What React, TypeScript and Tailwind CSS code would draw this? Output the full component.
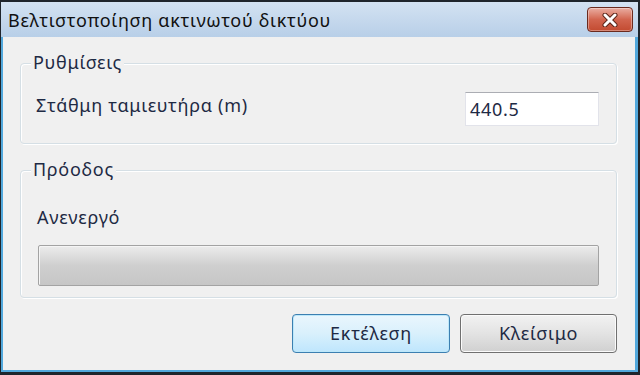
import React from "react";

function CloseButton() {
  return (
    <div className="w-[46px] h-[25px] rounded-[4px] border border-[#6b2a1e] bg-gradient-to-b from-[#e9ada2] via-[#d2654f] to-[#c24a30] flex items-center justify-center shadow-[inset_0_0_0_1px_rgba(255,255,255,0.35)]">
      <svg width="20" height="14" viewBox="0 0 20 14">
        <path d="M5 2 L15 12 M15 2 L5 12" stroke="#5a2418" strokeWidth="5" strokeLinecap="round" />
        <path d="M5 2 L15 12 M15 2 L5 12" stroke="#ffffff" strokeWidth="3" strokeLinecap="round" />
      </svg>
    </div>
  );
}

function GroupBox({ label, className, children }: { label: string; className?: string; children: React.ReactNode }) {
  return (
    <div className={"relative rounded-[4px] border border-[#d5dfe5] shadow-[inset_1px_1px_0_#ffffff,1px_1px_0_#ffffff] " + (className ?? "")}>
      <span className="absolute -top-[13px] left-[10px] px-[2px] bg-[#f0f0f0] text-[18px] tracking-[0.7px] leading-[22px] text-[#1e2a44]">{label}</span>
      {children}
    </div>
  );
}

export default function App() {
  return (
    <div
      className="w-[640px] h-[375px] bg-[#1f252c] pt-[2px] pl-[1px] pr-[2px] pb-[3px]"
      style={{ fontFamily: '"Noto Sans", "Open Sans", sans-serif' }}
    >
      <div className="w-full h-full flex flex-col bg-[#b9d0e8]">
        <div className="h-[35px] shrink-0 flex items-center justify-between pl-[7px] pr-[5px] bg-gradient-to-b from-[#d3e2f2] to-[#b8cfe8]">
          <span className="text-[18px] tracking-[0.7px] leading-[22px] text-[#111] pt-[1px]">Βελτιστοποίηση ακτινωτού δικτύου</span>
          <CloseButton />
        </div>
        <div className="flex-1 flex pl-[2px] pr-[3px] pb-[2px] bg-[#52a8dc]">
          <div className="flex-1 flex flex-col bg-[#f0f0f0] pt-[26px] pl-[17px] pr-[18px]">
            <GroupBox label="Ρυθμίσεις" className="h-[81px]">
              <div className="flex items-start justify-between pl-[15px] pr-[17px] pt-[28px]">
                <span className="text-[18px] tracking-[0.7px] leading-[22px] text-[#1e2a44] pt-[2px]">Στάθμη ταμιευτήρα (m)</span>
                <div className="w-[134px] h-[34px] bg-white border border-[#e2e3ea] border-t-[#abadb3] flex items-center pl-[4px] text-[18px] tracking-[0.7px] text-[#1e2a44]">
                  440.5
                </div>
              </div>
            </GroupBox>
            <GroupBox label="Πρόοδος" className="h-[128px] mt-[26px]">
              <div className="flex flex-col pl-[17px] pr-[17px] pt-[35px]">
                <span className="text-[18px] tracking-[0.7px] leading-[22px] text-[#1e2a44] ml-[-1px]">Ανενεργό</span>
                <div className="mt-[17px] h-[41px] rounded-[2px] border border-[#a3a3a3] bg-gradient-to-b from-[#ececec] via-[#cfcfcf] to-[#c6c6c6] shadow-[inset_1px_1px_0_#f5f5f5]" />
              </div>
            </GroupBox>
            <div className="flex justify-end gap-[10px] mt-[16px]">
              <button className="w-[158px] h-[39px] rounded-[4px] border border-[#3c7fb1] bg-gradient-to-b from-[#eaf6fd] via-[#d9f0fc] to-[#bee6fd] shadow-[inset_0_0_0_1px_#bde8fa] text-[18px] tracking-[0.7px] text-[#1e2a44]">
                Εκτέλεση
              </button>
              <button className="w-[157px] h-[39px] rounded-[4px] border border-[#707070] bg-gradient-to-b from-[#f2f2f2] via-[#e3e3e3] to-[#d0d0d0] shadow-[inset_0_0_0_1px_#fbfbfb] text-[18px] tracking-[0.7px] text-[#1e2a44]">
                Κλείσιμο
              </button>
            </div>
          </div>
        </div>
      </div>
    </div>
  );
}
